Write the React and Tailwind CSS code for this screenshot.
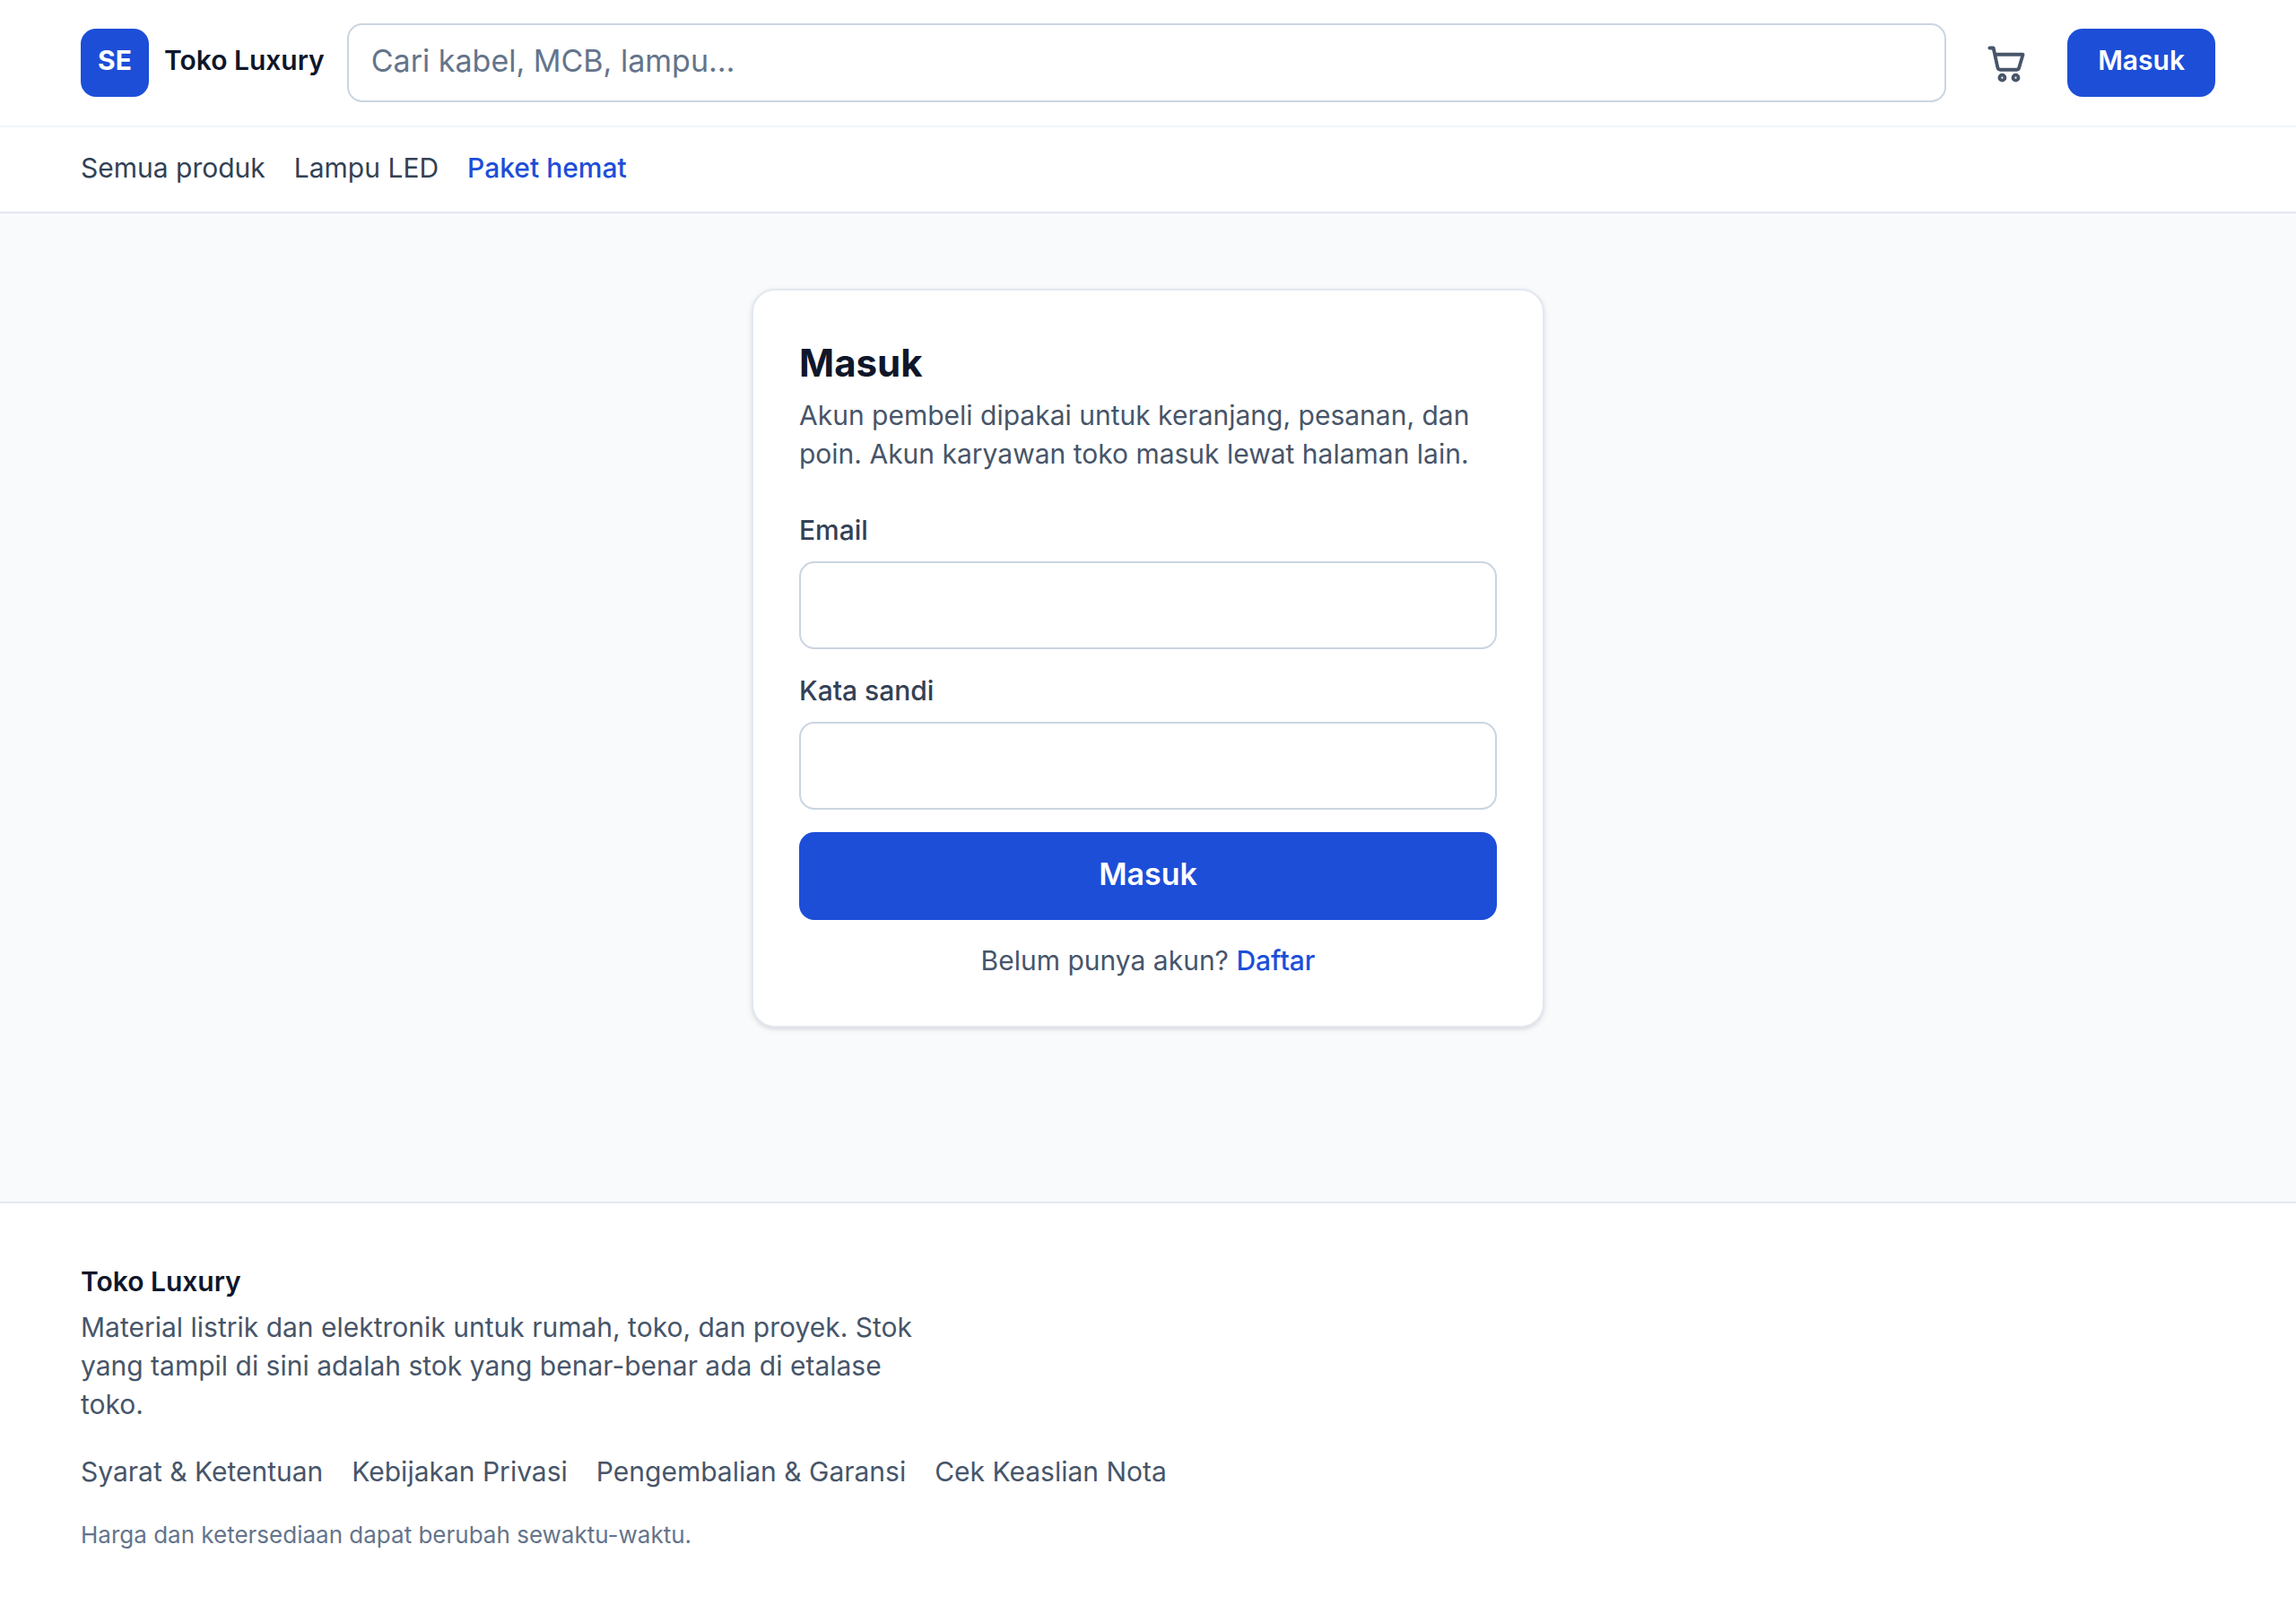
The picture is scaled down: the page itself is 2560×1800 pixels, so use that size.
import React, { useState } from "react";

const navLinks = [
  { label: "Semua produk", href: "#produk" },
  { label: "Lampu LED", href: "#lampu-led" },
];

const footerLinks = [
  { label: "Syarat & Ketentuan", href: "#syarat" },
  { label: "Kebijakan Privasi", href: "#privasi" },
  { label: "Pengembalian & Garansi", href: "#garansi" },
  { label: "Cek Keaslian Nota", href: "#cek-nota" },
];

function CartIcon() {
  return (
    <svg
      viewBox="0 0 24 24"
      fill="none"
      stroke="currentColor"
      strokeWidth="1.8"
      strokeLinecap="round"
      strokeLinejoin="round"
      className="size-[51px]"
      aria-hidden="true"
    >
      <path d="M3 4h2l2.2 10.2a1.5 1.5 0 0 0 1.5 1.2h8.3a1.5 1.5 0 0 0 1.45-1.1L20.5 7.4H5.8" />
      <circle cx="9.6" cy="19.6" r="1.4" />
      <circle cx="16.7" cy="19.6" r="1.4" />
    </svg>
  );
}

function Header() {
  return (
    <header className="border-b-2 border-[#e2e8f0] bg-white">
      <div className="border-b-2 border-[#f1f5f9]">
        <div className="flex items-center gap-[25px] px-[90px] py-[26px]">
          <a href="#beranda" className="flex shrink-0 items-center gap-[17px]">
            <span className="flex size-[76px] items-center justify-center rounded-[17px] bg-[#1d4ed8] pb-1.5 font-bold text-white">
              SE
            </span>
            <span className="pb-1.5 font-semibold text-[#0f172a]">
              Toko Luxury
            </span>
          </a>

          <form role="search" className="flex flex-1">
            <input
              type="search"
              aria-label="Cari produk"
              placeholder="Cari kabel, MCB, lampu…"
              className="h-[88px] w-full rounded-[17px] border-2 border-[#cbd5e1] px-[25px] pb-1.5 text-[34px] placeholder:text-[#64748b] focus:outline-none focus:border-[#1d4ed8]"
            />
          </form>

          <a
            href="#keranjang"
            aria-label="Keranjang"
            className="shrink-0 px-[17px] text-[#475569]"
          >
            <CartIcon />
          </a>
          <a
            href="#masuk"
            className="flex h-[76px] shrink-0 items-center rounded-[17px] bg-[#1d4ed8] px-[34px] pb-1.5 font-semibold text-white hover:bg-[#1e40af]"
          >
            Masuk
          </a>
        </div>
      </div>

      <nav className="flex gap-8 px-[90px] pt-6 pb-[27px]">
        {navLinks.map((link) => (
          <a key={link.href} href={link.href} className="text-[#334155]">
            {link.label}
          </a>
        ))}
        <a href="#paket" className="font-medium text-[#1d4ed8]">
          Paket hemat
        </a>
      </nav>
    </header>
  );
}

function Field({ id, label, ...props }) {
  return (
    <div>
      <label
        htmlFor={id}
        className="mb-[13px] block font-medium text-[#334155]"
      >
        {label}
      </label>
      <input
        id={id}
        className="block h-[98px] w-full rounded-[17px] border-2 border-[#cbd5e1] px-[25px] text-[34px] focus:outline-none focus:border-[#1d4ed8]"
        {...props}
      />
    </div>
  );
}

function LoginCard() {
  const [email, setEmail] = useState("");
  const [password, setPassword] = useState("");

  const handleSubmit = (e) => {
    e.preventDefault();
  };

  return (
    <div className="mx-auto w-full max-w-[884px] rounded-[26px] border-2 border-[#e2e8f0] bg-white p-[51px] shadow-[0_2px_6px_0_rgb(0_0_0/0.1),0_2px_4px_-2px_rgb(0_0_0/0.1)]">
      <h1 className="text-[42px] leading-[59px] font-bold text-[#0f172a]">
        Masuk
      </h1>
      <p className="mt-2 text-[#475569]">
        Akun pembeli dipakai untuk keranjang, pesanan, dan poin. Akun karyawan
        toko masuk lewat halaman lain.
      </p>

      <form onSubmit={handleSubmit} className="mt-[42px] space-y-[25px]">
        <Field
          id="email"
          label="Email"
          type="email"
          value={email}
          onChange={(e) => setEmail(e.target.value)}
          required
        />
        <Field
          id="password"
          label="Kata sandi"
          type="password"
          value={password}
          onChange={(e) => setPassword(e.target.value)}
          required
        />
        <button
          type="submit"
          className="block h-[98px] w-full rounded-[17px] bg-[#1d4ed8] pb-1.5 text-[34px] font-semibold text-white hover:bg-[#1e40af]"
        >
          Masuk
        </button>
      </form>

      <p className="mt-6 text-center text-[#475569]">
        Belum punya akun?{" "}
        <a href="#daftar" className="font-medium text-[#1d4ed8]">
          Daftar
        </a>
      </p>
    </div>
  );
}

function Footer() {
  return (
    <footer className="flex-1 border-t-2 border-[#e2e8f0] bg-white px-[90px] py-[66px]">
      <p className="font-semibold text-[#0f172a]">Toko Luxury</p>
      <p className="mt-2 max-w-[952px] text-[#475569]">
        Material listrik dan elektronik untuk rumah, toko, dan proyek. Stok yang
        tampil di sini adalah stok yang benar-benar ada di etalase toko.
      </p>
      <nav className="mt-8 flex flex-wrap gap-8 text-[#475569]">
        {footerLinks.map((link) => (
          <a key={link.href} href={link.href} className="hover:underline">
            {link.label}
          </a>
        ))}
      </nav>
      <p className="mt-8 text-[26px] leading-[34px] text-[#64748b]">
        Harga dan ketersediaan dapat berubah sewaktu-waktu.
      </p>
    </footer>
  );
}

export default function App() {
  return (
    <div className="flex min-h-screen flex-col bg-[#f8fafc] font-['Inter',sans-serif] text-[30px] leading-[43px]">
      <Header />
      <main className="px-[90px] pt-[84px] pb-[194px]">
        <LoginCard />
      </main>
      <Footer />
    </div>
  );
}
